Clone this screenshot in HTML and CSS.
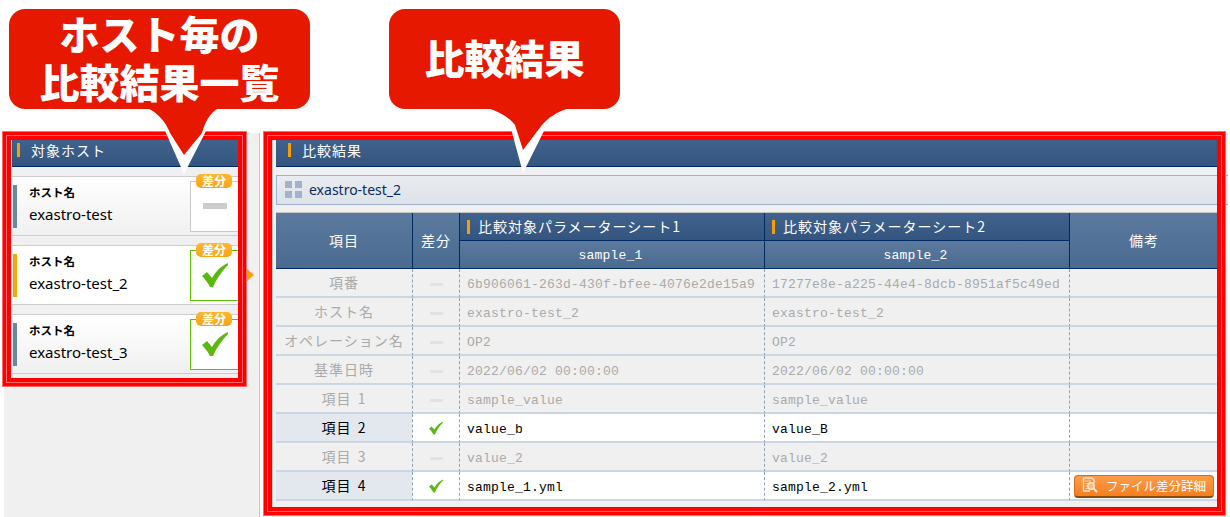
FILE: index.html
```html
<!DOCTYPE html>
<html>
  <head>
    <title>比較結果</title>
    <link rel="stylesheet" href="styles.css">
  </head>
  <body>
    <svg class="defs" width="0" height="0">
      <symbol id="check" viewBox="0 0 26 24">
        <path d="M0 13 L5 9 L10 15 C14 8 19 3 26 0 L26 2 C20 8 15 15 11 24 L8 24 C6 20 3 16 0 13 Z" fill="#5cb810"/>
      </symbol>
    </svg>

    <main class="page">
      <aside class="hosts">
        <div class="panel-head"><span class="mark"></span>対象ホスト</div>

        <div class="host">
          <span class="host-bar"></span>
          <div class="host-text">
            <div class="host-label">ホスト名</div>
            <div class="host-name">exastro-test</div>
          </div>
          <div class="status">
            <span class="badge">差分</span>
            <span class="dash"></span>
          </div>
        </div>

        <div class="host selected">
          <span class="host-bar"></span>
          <div class="host-text">
            <div class="host-label">ホスト名</div>
            <div class="host-name">exastro-test_2</div>
          </div>
          <div class="status diff">
            <span class="badge">差分</span>
            <svg class="check-big"><use href="#check"/></svg>
          </div>
        </div>

        <div class="host">
          <span class="host-bar"></span>
          <div class="host-text">
            <div class="host-label">ホスト名</div>
            <div class="host-name">exastro-test_3</div>
          </div>
          <div class="status diff">
            <span class="badge">差分</span>
            <svg class="check-big"><use href="#check"/></svg>
          </div>
        </div>
      </aside>

      <section class="result">
        <div class="panel-head result-head"><span class="mark"></span>比較結果</div>

        <div class="title-bar">
          <span class="grid-icon"><i></i><i></i><i></i><i></i></span>
          exastro-test_2
        </div>

        <table class="compare">
          <colgroup>
            <col class="col-item">
            <col class="col-diff">
            <col class="col-sheet">
            <col class="col-sheet">
            <col class="col-note">
          </colgroup>
          <thead>
            <tr>
              <th rowspan="2">項目</th>
              <th rowspan="2">差分</th>
              <th class="sheet"><span class="mark"></span>比較対象パラメーターシート1</th>
              <th class="sheet"><span class="mark"></span>比較対象パラメーターシート2</th>
              <th rowspan="2">備考</th>
            </tr>
            <tr>
              <th class="mono">sample_1</th>
              <th class="mono">sample_2</th>
            </tr>
          </thead>
          <tbody>
            <tr>
              <td class="item">項番</td>
              <td class="flag"><span class="dash small"></span></td>
              <td class="mono">6b906061-263d-430f-bfee-4076e2de15a9</td>
              <td class="mono">17277e8e-a225-44e4-8dcb-8951af5c49ed</td>
              <td></td>
            </tr>
            <tr>
              <td class="item">ホスト名</td>
              <td class="flag"><span class="dash small"></span></td>
              <td class="mono">exastro-test_2</td>
              <td class="mono">exastro-test_2</td>
              <td></td>
            </tr>
            <tr>
              <td class="item">オペレーション名</td>
              <td class="flag"><span class="dash small"></span></td>
              <td class="mono">OP2</td>
              <td class="mono">OP2</td>
              <td></td>
            </tr>
            <tr>
              <td class="item">基準日時</td>
              <td class="flag"><span class="dash small"></span></td>
              <td class="mono">2022/06/02 00:00:00</td>
              <td class="mono">2022/06/02 00:00:00</td>
              <td></td>
            </tr>
            <tr>
              <td class="item">項目 1</td>
              <td class="flag"><span class="dash small"></span></td>
              <td class="mono">sample_value</td>
              <td class="mono">sample_value</td>
              <td></td>
            </tr>
            <tr class="changed">
              <td class="item">項目 2</td>
              <td class="flag"><svg class="check-small"><use href="#check"/></svg></td>
              <td class="mono">value_b</td>
              <td class="mono">value_B</td>
              <td></td>
            </tr>
            <tr>
              <td class="item">項目 3</td>
              <td class="flag"><span class="dash small"></span></td>
              <td class="mono">value_2</td>
              <td class="mono">value_2</td>
              <td></td>
            </tr>
            <tr class="changed">
              <td class="item">項目 4</td>
              <td class="flag"><svg class="check-small"><use href="#check"/></svg></td>
              <td class="mono">sample_1.yml</td>
              <td class="mono">sample_2.yml</td>
              <td class="note">
                <button class="file-btn" type="button">
                  <svg class="file-icon" viewBox="0 0 16 16">
                    <path d="M1.5 1 H10 L12 3 V6 M1.5 1 V14 H8" fill="none" stroke="#ffe3c8" stroke-width="1.4"/>
                    <path d="M3.5 4 H9 M3.5 6.5 H6 M3.5 9 H5.5 M3.5 11.5 H6" stroke="#ffd3ac" stroke-width="1"/>
                    <circle cx="9" cy="9" r="3.2" fill="#ffb77c" stroke="#ffe8d4" stroke-width="1.4"/>
                    <path d="M11.4 11.4 L15 15" stroke="#ffe8d4" stroke-width="2"/>
                  </svg>
                  ファイル差分詳細
                </button>
              </td>
            </tr>
          </tbody>
        </table>
      </section>
    </main>

    <!-- annotations laid over the screen -->
    <div class="frame frame-hosts"></div>
    <div class="frame frame-result"></div>

    <div class="callout callout-hosts">
      <svg class="tail" width="120" height="90" viewBox="0 0 120 90">
        <path class="tail-edge" d="M14 9 C24 13 34 23 37 34 L55 75 L76 34 C79 24 83 14 94 9 Z"/>
        <path class="tail-fill" d="M18 9 C28 13 37 23 41 34 L55 56 L73 34 C76 24 80 14 90 9 Z"/>
      </svg>
      <div class="callout-text">ホスト毎の<br>比較結果一覧</div>
    </div>
    <div class="callout callout-result">
      <svg class="tail" width="120" height="90" viewBox="0 0 120 90">
        <path class="tail-edge" d="M10 9 C22 13 32 19 36 26 L49 74 L73 26 C79 19 87 13 100 9 Z"/>
        <path class="tail-fill" d="M14 9 C26 13 36 19 41 26 L49 51 L68 26 C74 19 82 13 96 9 Z"/>
      </svg>
      <div class="callout-text">比較結果</div>
    </div>
  </body>
</html>
```

FILE: styles.css
```css
/* CSS styles for the page */
html,
body {
  margin: 0;
  height: 517px;
  overflow: hidden;
  background-color: #ffffff;
}

body {
  font-family: "Noto Sans CJK JP", sans-serif;
  color: #000000;
}

.defs {
  position: absolute;
}

.page {
  display: flex;
  height: 384px;
  padding: 133px 0 0 4px;
}

.mark {
  display: inline-block;
  width: 3px;
  height: 14px;
  background-color: #f5a000;
}

.panel-head {
  display: flex;
  align-items: center;
  gap: 11px;
  height: 19px;
  padding: 0 0 7px 5px;
  border-bottom: 1px solid #002b62;
  background: linear-gradient(#41628c, #33557f);
  color: #ffffff;
  font-size: 14px;
  letter-spacing: 1px;
}

/* left column */
.hosts {
  width: 226px;
  padding: 7px 21px 0 8px;
  border-right: 1px solid #c8c8c8;
  background-color: #f0f0f0;
}

.host {
  position: relative;
  display: flex;
  align-items: center;
  box-sizing: border-box;
  height: 60px;
  margin-top: 9px;
  padding-left: 1px;
  border-top: 1px solid #cccccc;
  border-bottom: 1px solid #cccccc;
  background: linear-gradient(#ffffff, #f0f0f0);
}

.host.selected {
  background: #ffffff;
}

.host.selected::after {
  content: "";
  position: absolute;
  top: 22px;
  right: -16px;
  border-left: 8px solid #f5a000;
  border-top: 7px solid transparent;
  border-bottom: 7px solid transparent;
}

.host-bar {
  width: 4px;
  height: 43px;
  background-color: #6a85a8;
}

.selected .host-bar {
  background-color: #f5a800;
}

.host-text {
  flex: 1;
  padding: 0 0 6px 12px;
}

.host-label {
  font-size: 11.5px;
  font-weight: 700;
  line-height: 18px;
}

.host-name {
  margin-top: 3px;
  font-family: "Noto Sans", sans-serif;
  font-size: 15px;
  line-height: 20px;
}

.status {
  position: relative;
  display: flex;
  align-items: center;
  justify-content: center;
  box-sizing: border-box;
  width: 48px;
  height: 51px;
  border: 1px solid #c8c8c8;
  border-right: none;
  background-color: #ffffff;
}

.status.diff {
  border-color: #5fbf00;
}

.badge {
  position: absolute;
  top: -8px;
  left: 5px;
  width: 36px;
  height: 14px;
  border-radius: 5px;
  background: linear-gradient(#ffb52e, #fba414);
  color: #ffffff;
  font-size: 12px;
  font-weight: 700;
  line-height: 14px;
  text-align: center;
}

.dash {
  display: block;
  width: 24px;
  height: 6px;
  background-color: #cccccc;
}

.dash.small {
  display: inline-block;
  width: 13px;
  height: 3px;
  background-color: #e2e2e2;
  vertical-align: middle;
}

.check-big {
  width: 26px;
  height: 24px;
}

.check-small {
  display: block;
  width: 14px;
  height: 14px;
  margin: 0 auto;
}

/* right column */
.result {
  width: 952px;
  margin-left: 12px;
  padding: 7px 0 0 3px;
  border-left: 1px solid #c8c8c8;
  background-color: #f0f0f0;
}

.result-head {
  margin-right: 6px;
  padding-left: 12px;
}

.title-bar {
  display: flex;
  align-items: center;
  box-sizing: border-box;
  height: 30px;
  margin-top: 8px;
  padding: 0 0 1px 8px;
  border: 1px solid #9db0cc;
  border-right: none;
  background: linear-gradient(#e9ecf0, #dde2ea);
  color: #0d2c5e;
  font-family: "Noto Sans", sans-serif;
  font-size: 14px;
}

.grid-icon {
  display: grid;
  grid-template-columns: 7px 7px;
  gap: 3px;
  margin-right: 7px;
}

.grid-icon i {
  height: 7px;
  background-color: #a3b2c8;
}

.compare {
  width: 942px;
  margin-top: 7px;
  border-collapse: separate;
  border-spacing: 0;
  table-layout: fixed;
  border-top: 1px solid #c4c4c4;
  font-size: 14px;
  letter-spacing: 1px;
  word-spacing: 2px;
}

.col-item {
  width: 136px;
}

.col-diff {
  width: 47px;
}

.col-sheet {
  width: 305px;
}

.col-note {
  width: 149px;
}

.compare th {
  box-sizing: border-box;
  height: 28px;
  padding: 0 0 2px;
  border-bottom: 1px solid #002b62;
  background: linear-gradient(#5c7a9e, #4a6a91);
  color: #ffffff;
  font-weight: 400;
  text-align: center;
}

.compare th + th,
.compare tr + tr th {
  border-left: 1px solid #002b62;
}

.compare th[rowspan] {
  height: 56px;
}

.compare th.sheet {
  padding-left: 7px;
  background: linear-gradient(#41628c, #33557f);
  text-align: left;
  white-space: nowrap;
}

.compare th.sheet .mark {
  margin-right: 8px;
  vertical-align: -2px;
}

.compare th.mono {
  padding: 2px 3px 0 0;
}

.compare td {
  box-sizing: border-box;
  height: 29px;
  padding: 0 0 0 7px;
  border-bottom: 2px solid #ccd6e2;
  border-left: 1px dashed #8ca0b8;
  background-color: #f0f0f0;
  color: #aaaaaa;
  white-space: nowrap;
}

.compare td.mono {
  padding-top: 3px;
}

.compare td.item {
  padding: 0 0 1px;
  border-left: none;
  text-align: center;
}

.compare td.flag {
  padding: 0;
  text-align: center;
}

.mono {
  font-family: "Liberation Mono", monospace;
  font-size: 13px;
  letter-spacing: 0.2px;
  word-spacing: 0;
}

.changed td {
  background-color: #ffffff;
  color: #000000;
}

.changed td.item {
  background-color: #e3e8ee;
}

.compare td.note {
  padding: 1px 0 0 4px;
}

.file-btn {
  display: flex;
  align-items: center;
  gap: 8px;
  box-sizing: border-box;
  width: 140px;
  height: 23px;
  padding: 0 0 1px 7px;
  border: 1px solid #c96f22;
  border-bottom: 2px solid #8a4a12;
  border-radius: 4px;
  background: linear-gradient(#ff9c4b, #f57f1e);
  color: #ffffff;
  font-family: "Noto Sans CJK JP", sans-serif;
  font-size: 12.5px;
  white-space: nowrap;
}

.file-icon {
  width: 16px;
  height: 16px;
}

/* annotations */
.frame {
  position: absolute;
  box-sizing: border-box;
  border: 3px solid #ff0000;
  box-shadow: 0 0 0 1px #ff6a6a, inset 0 0 0 1px #ff6a6a;
}

.frame::after {
  content: "";
  position: absolute;
  inset: 1px;
  border: 4px solid #ff0000;
}

.frame-hosts {
  left: 3px;
  top: 132px;
  width: 243px;
  height: 254px;
}

.frame-result {
  left: 264px;
  top: 132px;
  width: 961px;
  height: 383px;
}

.callout {
  position: absolute;
  top: 9px;
  height: 100px;
}

.callout-hosts {
  left: 9px;
  width: 301px;
}

.callout-result {
  left: 389px;
  width: 231px;
}

.callout-text {
  position: relative;
  display: flex;
  align-items: center;
  justify-content: center;
  box-sizing: border-box;
  height: 100%;
  padding-bottom: 5px;
  border-radius: 16px;
  background-color: #e61900;
  color: #ffffff;
  font-size: 40px;
  font-weight: 900;
  line-height: 48px;
  text-align: center;
}

.tail {
  position: absolute;
  top: 90px;
  left: 120px;
  overflow: visible;
}

.callout-result .tail {
  left: 85px;
}

.tail-edge {
  fill: #ffffff;
}

.tail-fill {
  fill: #e61900;
}
```
